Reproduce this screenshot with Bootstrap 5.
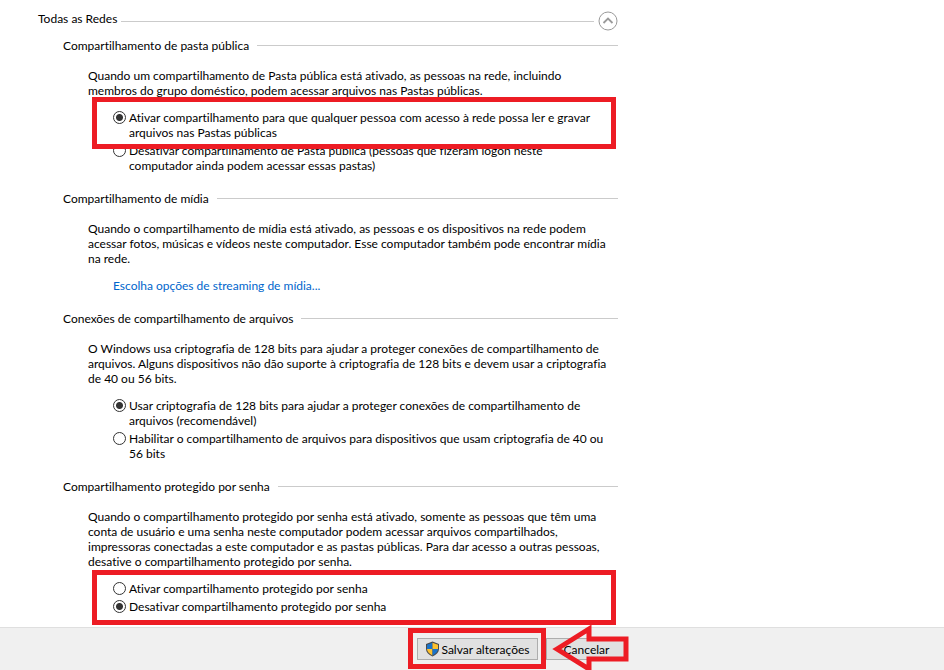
<!DOCTYPE html>
<html lang="pt-BR">
<head>
<meta charset="utf-8">
<meta name="viewport" content="width=device-width, initial-scale=1">
<title>Configurações de compartilhamento avançadas</title>
<link href="https://cdn.jsdelivr.net/npm/bootstrap@5.3.0/dist/css/bootstrap.min.css" rel="stylesheet">
<style>
  body { font: 12px/15px Lato, "Open Sans", sans-serif; font-variant-ligatures: none; color: #000; background: #fff; }
  .settings { max-width: 618px; padding: 7px 0 0 38px; }
  .rule { height: 1px; background: #cbcbcb; }
  .profile-title, .group-title { font-size: inherit; line-height: 15px; font-weight: 400; margin: 0; }
  .profile-title { padding-bottom: 6px; }
  .toggle { width: 20px; height: 20px; border: 0; padding: 0; background: none; }
  .profile-head { height: 28px; }
  .groups { padding: 3px 0 0 25px; }
  .group { margin-bottom: 18px; }
  .group-text { margin: 15px 0 12px 25px; white-space: nowrap; }
  .options { margin-left: 50px; white-space: nowrap; }
  .option { gap: 3px; }
  .option + .option { margin-top: 3px; }
  .option input { appearance: none; flex: none; width: 13px; height: 13px; margin: 1px 0 0; border: 1px solid #333; border-radius: 50%; background: #fff; }
  .option input:checked { background: radial-gradient(circle, #333 0 3px, #fff 4px); }
  .stream-link { color: #0066cc; text-decoration: none; }
  .callout-box { border: 5px solid #ed1c24; pointer-events: none; z-index: 2; }
  .around-option { inset: -13px 2px -9px -21px; }
  .around-options { inset: -11px 2px -11px -21px; }
  .around-button { inset: -10px -8px -9px -9px; }
  .actions { background: #f0f0f0; border-top: 1px solid #dfdfdf; padding: 10px 0 10px 417px; gap: 8px; }
  .action { height: 22px; background: #e1e1e1; border: 1px solid #adadad; padding: 0; line-height: 15px; color: #000; }
  .action-save { width: 121px; gap: 1px; }
  .action-cancel { width: 81px; }
  .callout-arrow { left: 5px; top: -13px; pointer-events: none; z-index: 3; }
</style>
</head>
<body class="d-flex flex-column min-vh-100 overflow-hidden">
<main class="flex-grow-1">
  <div class="settings">
    <header class="profile-head d-flex align-items-center">
      <h1 class="profile-title">Todas as Redes</h1>
      <div class="rule flex-grow-1 ms-1 me-1"></div>
      <button class="toggle d-flex" type="button" aria-label="Recolher Todas as Redes">
        <svg width="20" height="20" viewBox="0 0 20 20" fill="none" stroke="#9a9a9a"><circle cx="10" cy="10" r="9"/><path d="M5.500 12 10 7.500l4.500 4.500" stroke-width="1.800"/></svg>
      </button>
    </header>
    <form class="groups" id="sharing">
      <section class="group">
        <div class="d-flex align-items-center gap-2"><h2 class="group-title">Compartilhamento de pasta pública</h2><div class="rule flex-grow-1"></div></div>
        <p class="group-text">Quando um compartilhamento de Pasta pública está ativado, as pessoas na rede, incluindo<br>membros do grupo doméstico, podem acessar arquivos nas Pastas públicas.</p>
        <div class="options">
          <div class="option d-flex position-relative">
            <input type="radio" name="public" id="public-on" checked>
            <label for="public-on">Ativar compartilhamento para que qualquer pessoa com acesso à rede possa ler e gravar<br>arquivos nas Pastas públicas</label>
            <div class="callout-box around-option position-absolute"></div>
          </div>
          <div class="option d-flex">
            <input type="radio" name="public" id="public-off">
            <label for="public-off">Desativar compartilhamento de Pasta pública (pessoas que fizeram logon neste<br>computador ainda podem acessar essas pastas)</label>
          </div>
        </div>
      </section>
      <section class="group">
        <div class="d-flex align-items-center gap-2"><h2 class="group-title">Compartilhamento de mídia</h2><div class="rule flex-grow-1"></div></div>
        <p class="group-text">Quando o compartilhamento de mídia está ativado, as pessoas e os dispositivos na rede podem<br>acessar fotos, músicas e vídeos neste computador. Esse computador também pode encontrar mídia<br>na rede.</p>
        <div class="options"><a class="stream-link" href="#streaming">Escolha opções de streaming de mídia...</a></div>
      </section>
      <section class="group">
        <div class="d-flex align-items-center gap-2"><h2 class="group-title">Conexões de compartilhamento de arquivos</h2><div class="rule flex-grow-1"></div></div>
        <p class="group-text">O Windows usa criptografia de 128 bits para ajudar a proteger conexões de compartilhamento de<br>arquivos. Alguns dispositivos não dão suporte à criptografia de 128 bits e devem usar a criptografia<br>de 40 ou 56 bits.</p>
        <div class="options">
          <div class="option d-flex">
            <input type="radio" name="crypto" id="crypto-128" checked>
            <label for="crypto-128">Usar criptografia de 128 bits para ajudar a proteger conexões de compartilhamento de<br>arquivos (recomendável)</label>
          </div>
          <div class="option d-flex">
            <input type="radio" name="crypto" id="crypto-40">
            <label for="crypto-40">Habilitar o compartilhamento de arquivos para dispositivos que usam criptografia de 40 ou<br>56 bits</label>
          </div>
        </div>
      </section>
      <section class="group mb-0">
        <div class="d-flex align-items-center gap-2"><h2 class="group-title">Compartilhamento protegido por senha</h2><div class="rule flex-grow-1"></div></div>
        <p class="group-text">Quando o compartilhamento protegido por senha está ativado, somente as pessoas que têm uma<br>conta de usuário e uma senha neste computador podem acessar arquivos compartilhados,<br>impressoras conectadas a este computador e as pastas públicas. Para dar acesso a outras pessoas,<br>desative o compartilhamento protegido por senha.</p>
        <div class="options position-relative">
          <div class="option d-flex">
            <input type="radio" name="password" id="password-on">
            <label for="password-on">Ativar compartilhamento protegido por senha</label>
          </div>
          <div class="option d-flex">
            <input type="radio" name="password" id="password-off" checked>
            <label for="password-off">Desativar compartilhamento protegido por senha</label>
          </div>
          <div class="callout-box around-options position-absolute"></div>
        </div>
      </section>
    </form>
  </div>
</main>
<footer class="actions d-flex">
  <div class="position-relative">
    <button class="action action-save d-flex align-items-center justify-content-center" type="submit" form="sharing">
      <svg width="15" height="16" viewBox="0 0 15 16"><path d="M7.500 0.500 14 3v5c0 3-2.500 5.500-6.500 7.500C3.500 13.500 1 11 1 8V3z" fill="#4a4a4a"/><path d="M7.500 1.800V8H2V3.700z" fill="#1a73c9"/><path d="M7.500 1.800V8H13V3.700z" fill="#fdc12e"/><path d="M2 8h5.500v6.400C4 12.500 2 10.500 2 8z" fill="#fdc12e"/><path d="M13 8H7.500v6.400C11 12.500 13 10.500 13 8z" fill="#1a73c9"/></svg>
      <span>Salvar alterações</span>
    </button>
    <div class="callout-box around-button position-absolute"></div>
  </div>
  <div class="position-relative">
    <button class="action action-cancel" type="button">Cancelar</button>
    <svg class="callout-arrow position-absolute" width="80" height="48" viewBox="0 0 80 48" fill="none" stroke="#ed1c24" stroke-width="5"><path d="M6 24 38 4v10h37v20H38v10z"/></svg>
  </div>
</footer>
<script src="https://cdn.jsdelivr.net/npm/bootstrap@5.3.0/dist/js/bootstrap.bundle.min.js"></script>
</body>
</html>
